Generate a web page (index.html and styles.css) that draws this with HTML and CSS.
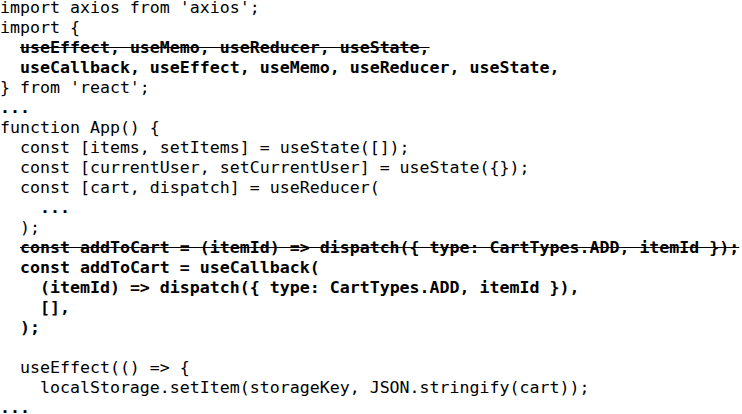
FILE: index.html
```html
<!DOCTYPE html>
<html>
<head>
<meta charset="utf-8">
<link rel="stylesheet" href="styles.css">
</head>
<body>
<div class="code">
<div class="ln">import axios from 'axios';</div>
<div class="ln">import {</div>
<div class="ln">  <b class="del">useEffect, useMemo, useReducer, useState,</b></div>
<div class="ln">  <b>useCallback, useEffect, useMemo, useReducer, useState,</b></div>
<div class="ln">} from 'react';</div>
<div class="ln"><b>...</b></div>
<div class="ln">function App() {</div>
<div class="ln">  const [items, setItems] = useState([]);</div>
<div class="ln">  const [currentUser, setCurrentUser] = useState({});</div>
<div class="ln">  const [cart, dispatch] = useReducer(</div>
<div class="ln">    <b>...</b></div>
<div class="ln">  );</div>
<div class="ln">  <b class="del">const addToCart = (itemId) =&gt; dispatch({ type: CartTypes.ADD, itemId });</b></div>
<div class="ln">  <b>const addToCart = useCallback(</b></div>
<div class="ln">    <b>(itemId) =&gt; dispatch({ type: CartTypes.ADD, itemId }),</b></div>
<div class="ln">    <b>[],</b></div>
<div class="ln">  <b>);</b></div>
<div class="ln"> </div>
<div class="ln">  useEffect(() =&gt; {</div>
<div class="ln">    localStorage.setItem(storageKey, JSON.stringify(cart));</div>
<div class="ln"><b>...</b></div>
</div>
</body>
</html>
```
FILE: styles.css
```css
html, body {
  margin: 0;
  padding: 0;
  background: #ffffff;
}
.code {
  margin-top: -2px;
  font-family: "DejaVu Sans Mono", monospace;
  font-size: 16.6px;
  line-height: 20px;
  color: #000000;
}
.ln {
  white-space: pre;
  height: 20px;
}
.del {
  text-decoration: line-through;
}
b {
  font-weight: bold;
}
```
